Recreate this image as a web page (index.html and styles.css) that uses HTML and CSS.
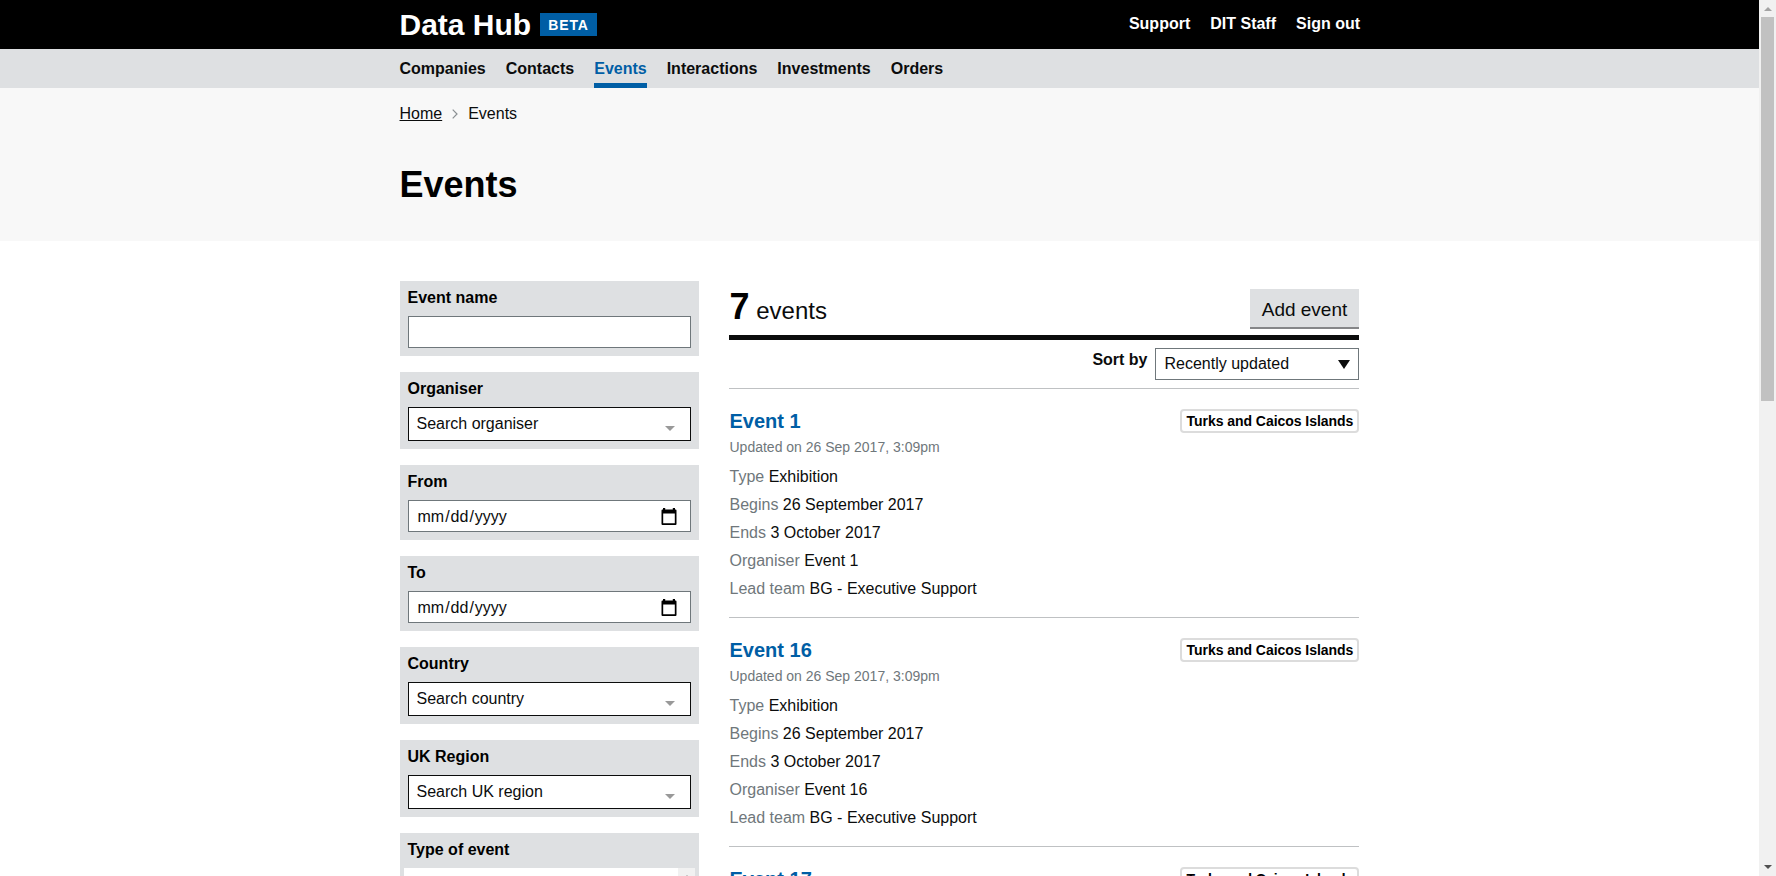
FILE: index.html
```html
<!DOCTYPE html>
<html lang="en">
<head>
<meta charset="utf-8">
<title>Events - Data Hub</title>
<link rel="stylesheet" href="styles.css">
</head>
<body>
<div class="viewport">
  <div class="page">
    <header class="header">
      <div class="container header-inner">
        <a class="logo">Data Hub</a>
        <span class="phase">BETA</span>
        <nav class="account"><a>Support</a><a>DIT Staff</a><a>Sign out</a></nav>
      </div>
    </header>
    <nav class="main-nav">
      <div class="container nav-inner">
        <a>Companies</a><a>Contacts</a><a class="active">Events</a><a>Interactions</a><a>Investments</a><a>Orders</a>
      </div>
    </nav>
    <section class="local-header">
      <div class="container">
        <div class="breadcrumbs">
          <a class="crumb-link">Home</a>
          <svg class="chevron" width="6" height="10" viewBox="0 0 6 10"><path d="M0.7 0.7L5 5L0.7 9.3" fill="none" stroke="#8a8f92" stroke-width="1.2"/></svg>
          <span>Events</span>
        </div>
        <h1 class="title">Events</h1>
      </div>
    </section>
    <main class="content">
      <form class="filters">
        <div class="filter"><label class="label">Event name</label><input class="input" type="text"></div>
        <div class="filter"><label class="label">Organiser</label><div class="typeahead"><span>Search organiser</span><i class="caret"></i></div></div>
        <div class="filter"><label class="label">From</label><div class="input date"><span class="date-text">mm<span class="slash">/</span>dd<span class="slash">/</span>yyyy</span><svg class="calendar" width="16" height="17" viewBox="0 0 16 17"><path d="M2 0h2.2v1.5h7.6V0H14v1.5h.5q1 0 1 1V16q0 1-1 1h-13q-1 0-1-1V2.500q0-1 1-1H2zM2.200 5.500V15.200H13.800V5.500z" fill="#000" fill-rule="evenodd"/></svg></div></div>
        <div class="filter"><label class="label">To</label><div class="input date"><span class="date-text">mm<span class="slash">/</span>dd<span class="slash">/</span>yyyy</span><svg class="calendar" width="16" height="17" viewBox="0 0 16 17"><path d="M2 0h2.2v1.5h7.6V0H14v1.5h.5q1 0 1 1V16q0 1-1 1h-13q-1 0-1-1V2.500q0-1 1-1H2zM2.200 5.500V15.200H13.800V5.500z" fill="#000" fill-rule="evenodd"/></svg></div></div>
        <div class="filter"><label class="label">Country</label><div class="typeahead"><span>Search country</span><i class="caret"></i></div></div>
        <div class="filter"><label class="label">UK Region</label><div class="typeahead"><span>Search UK region</span><i class="caret"></i></div></div>
        <div class="filter"><label class="label">Type of event</label><div class="options"><div class="options-track"><i class="arrow-up"></i></div></div></div>
      </form>
      <section class="results">
        <div class="results-header">
          <h2 class="count"><b class="count-number">7</b> events</h2>
          <a class="button">Add event</a>
        </div>
        <div class="sort">
          <label class="sort-label">Sort by</label>
          <div class="select"><span>Recently updated</span><i class="select-arrow"></i></div>
        </div>
        <ol class="list">
          <li class="event">
            <div class="event-head"><h3 class="event-title">Event 1</h3><span class="badge">Turks and Caicos Islands</span></div>
            <p class="updated">Updated on 26 Sep 2017, 3:09pm</p>
            <p class="meta"><span class="key">Type</span> Exhibition</p>
            <p class="meta"><span class="key">Begins</span> 26 September 2017</p>
            <p class="meta"><span class="key">Ends</span> 3 October 2017</p>
            <p class="meta"><span class="key">Organiser</span> Event 1</p>
            <p class="meta"><span class="key">Lead team</span> BG - Executive Support</p>
          </li>
          <li class="event">
            <div class="event-head"><h3 class="event-title">Event 16</h3><span class="badge">Turks and Caicos Islands</span></div>
            <p class="updated">Updated on 26 Sep 2017, 3:09pm</p>
            <p class="meta"><span class="key">Type</span> Exhibition</p>
            <p class="meta"><span class="key">Begins</span> 26 September 2017</p>
            <p class="meta"><span class="key">Ends</span> 3 October 2017</p>
            <p class="meta"><span class="key">Organiser</span> Event 16</p>
            <p class="meta"><span class="key">Lead team</span> BG - Executive Support</p>
          </li>
          <li class="event">
            <div class="event-head"><h3 class="event-title">Event 17</h3><span class="badge">Turks and Caicos Islands</span></div>
          </li>
        </ol>
      </section>
    </main>
  </div>
  <div class="scrollbar"><i class="arrow-up"></i><div class="thumb"></div><i class="arrow-down"></i></div>
</div>
</body>
</html>
```
FILE: styles.css
```css
* { box-sizing: border-box; }
body { margin: 0; overflow: hidden; background: #fff; color: #0b0c0c; font: 16px/20px "Liberation Sans", Arial, sans-serif; }
h1, h2, h3, p, ol { margin: 0; padding: 0; }
ol { list-style: none; }
i { display: block; }
.viewport { display: flex; height: 876px; overflow: hidden; }
.page { flex: 1; height: 876px; overflow: hidden; }
.container { width: 960px; margin: 0 auto; }

.header { background: #000; color: #fff; height: 49px; }
.header-inner { display: flex; align-items: flex-start; }
.logo { font-size: 30px; font-weight: 700; line-height: 34px; padding-top: 8px; }
.phase { margin: 13px 0 0 9px; height: 23px; padding: 0 8px; background: #005ea5; font-size: 14px; font-weight: 700; line-height: 24px; letter-spacing: .9px; }
.account { display: flex; gap: 20px; margin: 14px -.5px 0 auto; font-weight: 700; }

.main-nav { background: #dee0e2; height: 39px; }
.nav-inner { display: flex; gap: 20px; height: 39px; font-weight: 700; }
.nav-inner a { padding-top: 10px; }
.nav-inner .active { color: #005ea5; border-bottom: 5px solid #005ea5; }

.local-header { background: #f8f8f8; height: 153px; padding-top: 16px; }
.breadcrumbs { display: flex; align-items: center; height: 20px; }
.crumb-link { text-decoration: underline; text-underline-offset: 1px; }
.chevron { margin: 0 10px; }
.title { font-size: 36px; line-height: 40px; margin-top: 41px; color: #000; }

.content { display: flex; gap: 30px; width: 959px; margin: 40px auto 0; }
.filters { width: 299px; display: flex; flex-direction: column; gap: 16px; }
.filter { background: #dee0e2; padding: 7px 8px 8px; }
.label { display: block; font-weight: 700; line-height: 20px; margin: 0 0 8px -.5px; color: #000; }
.input { display: block; width: 283px; height: 32px; margin: 0; border: 1px solid #6f777b; background: #fff; }
.date { display: flex; justify-content: space-between; padding: 6px 13px 0 8.5px; }
.calendar { margin-top: 1px; }
.slash { margin: 0 1px; }
.typeahead { display: flex; justify-content: space-between; height: 34px; border: 1px solid #0b0c0c; background: #fff; padding: 6px 15px 0 7.5px; }
.caret { margin-top: 12px; width: 0; height: 0; border: 5px solid transparent; border-top-color: #999; border-bottom: 0; }
.options { display: flex; justify-content: flex-end; height: 200px; margin: 0 -4px; background: #fff; }
.options-track { width: 17px; background: #f1f1f1; padding: 7px 5px; }

.results { width: 630px; }
.results-header { display: flex; justify-content: space-between; height: 59px; border-bottom: 5px solid #0b0c0c; }
.count { font-size: 24px; font-weight: 400; line-height: 40px; padding: 6px 0 0 .5px; }
.count-number { font-size: 36px; color: #000; }
.button { width: 109px; height: 40px; margin-top: 8px; padding-top: 11px; background: #dee0e2; border-bottom: 2px solid #858688; font-size: 19px; text-align: center; }
.sort { display: flex; justify-content: flex-end; height: 49px; padding-top: 8px; border-bottom: 1px solid #bfc1c3; }
.sort-label { font-weight: 700; margin: 2px 7.5px 0 0; }
.select { display: flex; justify-content: space-between; width: 204px; height: 32px; border: 1px solid #6f777b; padding: 5px 8px 0 8.5px; }
.select-arrow { width: 0; height: 0; margin-top: 6px; border: 6px solid transparent; border-top: 9px solid #0b0c0c; border-bottom: 0; }

.event { height: 229px; border-bottom: 1px solid #bfc1c3; padding: 20px 0 0 .5px; }
.event-head { display: flex; justify-content: space-between; height: 24px; }
.event-title { font-size: 20px; line-height: 24px; color: #005ea5; }
.badge { width: 179px; height: 24px; padding-left: 4.5px; border: 2px solid #dcdcdc; border-radius: 4px; font-size: 14px; font-weight: 700; line-height: 20px; letter-spacing: -.04px; white-space: nowrap; color: #000; }
.updated { font-size: 14px; line-height: 20px; margin: 4px 0 6px; color: #6f777b; }
.meta { line-height: 28px; }
.key { color: #6f777b; }

.scrollbar { display: flex; flex-direction: column; align-items: center; width: 17px; background: #f1f1f1; padding: 7px 0; }
.thumb { width: 13px; height: 384px; margin: 6px 0 auto; background: #c1c1c1; }
.arrow-up, .arrow-down { width: 0; height: 0; border: 4px solid transparent; }
.arrow-up { border-top: 0; border-bottom: 4px solid #a3a3a3; }
.arrow-down { border-bottom: 0; border-top: 4px solid #505050; }
```
